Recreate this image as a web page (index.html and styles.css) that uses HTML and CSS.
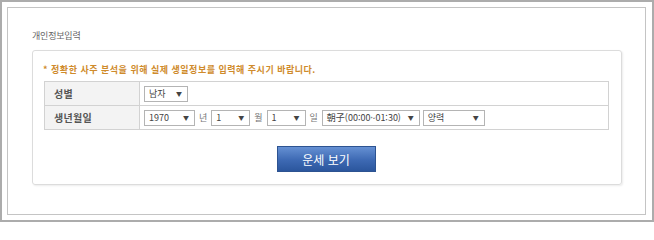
FILE: index.html
```html
<!DOCTYPE html>
<html lang="ko">
<head>
<meta charset="utf-8">
<title>개인정보입력</title>
<link rel="stylesheet" href="styles.css">
</head>
<body>
<div class="frame">
  <div class="inner">
    <h2 class="title">개인정보입력</h2>
    <div class="box">
      <p class="notice">* 정확한 사주 분석을 위해 실제 생일정보를 입력해 주시기 바랍니다.</p>
      <table class="form">
        <tr>
          <th>성별</th>
          <td>
            <div class="fields">
              <span class="sel w-gender">남자<i class="arr">▼</i></span>
            </div>
          </td>
        </tr>
        <tr>
          <th>생년월일</th>
          <td>
            <div class="fields">
              <span class="sel w-year">1970<i class="arr">▼</i></span>
              <span class="lbl">년</span>
              <span class="sel w-md">1<i class="arr">▼</i></span>
              <span class="lbl">월</span>
              <span class="sel w-md">1<i class="arr">▼</i></span>
              <span class="lbl">일</span>
              <span class="sel w-time">朝子(00:00~01:30)<i class="arr">▼</i></span>
              <span class="sel w-cal">양력<i class="arr">▼</i></span>
            </div>
          </td>
        </tr>
      </table>
      <div class="actions">
        <button class="btn" type="button">운세 보기</button>
      </div>
    </div>
  </div>
</div>
</body>
</html>
```

FILE: styles.css
```css
* { box-sizing: border-box; }

html, body {
  margin: 0;
  padding: 0;
  background: #ffffff;
}

body {
  font-family: "Noto Sans CJK KR", "Noto Sans", sans-serif;
  color: #333;
}

.frame {
  width: 654px;
  height: 222px;
  border: 2px solid #acacac;
  padding: 5px 6px 5px 5px;
}

.inner {
  height: 100%;
  border: 1px solid #c4c4c4;
  padding: 22px 23px 0 24px;
}

.title {
  margin: 0 0 8px;
  font-size: 9px;
  line-height: 12px;
  font-weight: normal;
  letter-spacing: -0.2px;
  color: #666;
}

.box {
  width: 590px;
  border: 1px solid #dcdcdc;
  border-radius: 3px;
  box-shadow: 1px 1px 2px rgba(0, 0, 0, 0.08);
  padding: 13px 13px 12px 11px;
}

.notice {
  margin: 0 0 5px -1px;
  font-size: 9px;
  line-height: 12px;
  font-weight: bold;
  letter-spacing: 0.5px;
  color: #cf8b2c;
}

.form {
  width: 565px;
  border-collapse: collapse;
}

.form th,
.form td {
  border: 1px solid #d2d2d2;
  height: 24px;
  padding: 0;
}

.form th {
  width: 95px;
  background: #f3f3f3;
  text-align: left;
  padding-left: 9px;
  font-size: 10px;
  font-weight: bold;
  letter-spacing: 0.3px;
  color: #555;
}

.form td {
  padding-left: 4px;
  background: #fff;
}

.fields {
  display: flex;
  align-items: center;
}

.sel {
  display: flex;
  align-items: center;
  height: 16px;
  border: 1px solid #b4b4b4;
  padding: 0 5px 0 4px;
  font-size: 9px;
  color: #444;
  background: #fff;
}

.arr {
  font-style: normal;
  font-size: 6px;
  margin-left: auto;
  color: #444;
}

.w-gender { width: 44px; }
.w-year { width: 51px; }
.w-md { width: 39px; }
.w-time { width: 98px; margin-right: 3px; }
.w-cal { width: 62px; }

.lbl {
  font-size: 9px;
  color: #777;
  margin: 0 4px 0 4px;
}

.actions {
  display: flex;
  justify-content: center;
  margin-top: 16px;
}

.btn {
  width: 99px;
  height: 26px;
  border: 1px solid #2d5391;
  background: linear-gradient(#6590d3, #3d69b3 55%, #2b569d);
  color: #fff;
  font-family: "Noto Sans CJK KR", sans-serif;
  font-size: 12px;
  padding: 0;
  letter-spacing: 0;
}
```
